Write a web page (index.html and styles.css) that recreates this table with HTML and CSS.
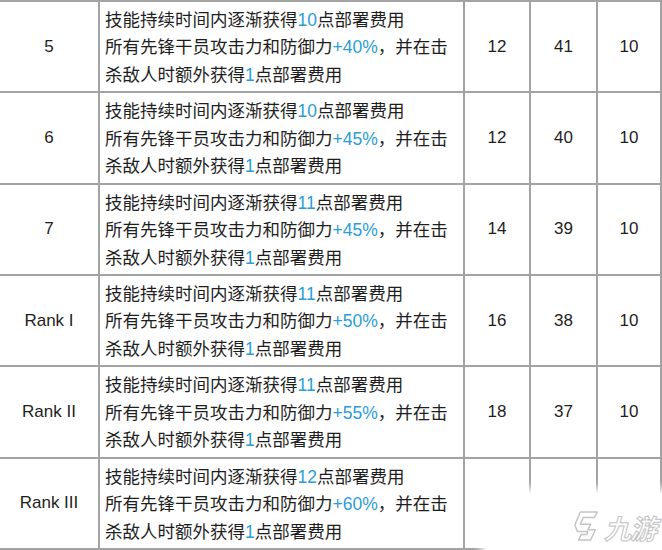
FILE: index.html
```html
<!DOCTYPE html>
<html lang="zh">
<head>
<meta charset="utf-8">
<link rel="stylesheet" href="styles.css">
</head>
<body>
<div class="table">
  <div class="row">
    <div class="cell lvl">5</div>
    <div class="cell desc"><p class="txt">技能持续时间内逐渐获得<span class="hl">10</span>点部署费用<br>所有先锋干员攻击力和防御力<span class="hl">+40%</span>，并在击<br>杀敌人时额外获得<span class="hl">1</span>点部署费用</p></div>
    <div class="cell num">12</div>
    <div class="cell num">41</div>
    <div class="cell num">10</div>
  </div>
  <div class="row">
    <div class="cell lvl">6</div>
    <div class="cell desc"><p class="txt">技能持续时间内逐渐获得<span class="hl">10</span>点部署费用<br>所有先锋干员攻击力和防御力<span class="hl">+45%</span>，并在击<br>杀敌人时额外获得<span class="hl">1</span>点部署费用</p></div>
    <div class="cell num">12</div>
    <div class="cell num">40</div>
    <div class="cell num">10</div>
  </div>
  <div class="row">
    <div class="cell lvl">7</div>
    <div class="cell desc"><p class="txt">技能持续时间内逐渐获得<span class="hl">11</span>点部署费用<br>所有先锋干员攻击力和防御力<span class="hl">+45%</span>，并在击<br>杀敌人时额外获得<span class="hl">1</span>点部署费用</p></div>
    <div class="cell num">14</div>
    <div class="cell num">39</div>
    <div class="cell num">10</div>
  </div>
  <div class="row">
    <div class="cell lvl">Rank I</div>
    <div class="cell desc"><p class="txt">技能持续时间内逐渐获得<span class="hl">11</span>点部署费用<br>所有先锋干员攻击力和防御力<span class="hl">+50%</span>，并在击<br>杀敌人时额外获得<span class="hl">1</span>点部署费用</p></div>
    <div class="cell num">16</div>
    <div class="cell num">38</div>
    <div class="cell num">10</div>
  </div>
  <div class="row">
    <div class="cell lvl">Rank II</div>
    <div class="cell desc"><p class="txt">技能持续时间内逐渐获得<span class="hl">11</span>点部署费用<br>所有先锋干员攻击力和防御力<span class="hl">+55%</span>，并在击<br>杀敌人时额外获得<span class="hl">1</span>点部署费用</p></div>
    <div class="cell num">18</div>
    <div class="cell num">37</div>
    <div class="cell num">10</div>
  </div>
  <div class="row">
    <div class="cell lvl">Rank III</div>
    <div class="cell desc"><p class="txt">技能持续时间内逐渐获得<span class="hl">12</span>点部署费用<br>所有先锋干员攻击力和防御力<span class="hl">+60%</span>，并在击<br>杀敌人时额外获得<span class="hl">1</span>点部署费用</p></div>
    <div class="cell num"></div>
    <div class="cell num"></div>
    <div class="cell num"></div>
  </div>
</div>
<div class="watermark">
  <svg class="wm-logo" width="28" height="34" viewBox="0 0 30 36">
    <path d="M9 3 L27 3 L24 9 L12 9 L9 16 L20 16 L17 22 L25 22 L20 33 L7 33 L10 27 L16 27 L17 24 L6 24 L3 17 Z" fill="#fff" stroke="#c4c4c4" stroke-width="1.6" stroke-linejoin="round"/>
  </svg>
  <span class="wm-text">九游</span>
</div>
</body>
</html>
```
FILE: styles.css
```css
html, body {
  margin: 0;
  padding: 0;
  background: #fff;
}
body {
  width: 662px;
  height: 550px;
  overflow: hidden;
  position: relative;
  font-family: "Liberation Sans", "Noto Sans CJK SC", sans-serif;
  color: #1e1e1e;
}
.table {
  display: grid;
  grid-template-rows: repeat(6, 91.33px);
  border-top: 2px solid #a3a3a3;
}
.row {
  display: grid;
  grid-template-columns: 100px 365px 66px 67px 64px;
}
.cell {
  border-right: 2px solid #a3a3a3;
  border-bottom: 2px solid #a3a3a3;
  display: flex;
  align-items: center;
  font-size: 17px;
  box-sizing: border-box;
  min-width: 0;
}
.lvl, .num {
  justify-content: center;
}
.desc {
  padding-left: 5px;
}
.txt {
  margin: 0;
  font-size: 17.5px;
  line-height: 27.5px;
  white-space: nowrap;
  padding-top: 3px;
}
.hl {
  color: #2a9dd6;
}
.watermark {
  position: absolute;
  left: 486px;
  top: 493px;
  width: 180px;
  height: 62px;
  background: #fff;
  box-shadow: 0 0 8px 5px #fff;
  display: flex;
  align-items: center;
  padding-left: 86px;
  box-sizing: border-box;
  gap: 4px;
}
.wm-logo {
  display: block;
  margin-top: 4px;
}
.wm-text {
  font-family: "Noto Sans CJK SC", sans-serif;
  font-size: 27px;
  font-weight: 700;
  font-style: italic;
  color: #fff;
  -webkit-text-stroke: 1px #c2c2c2;
  margin-top: 6px;
  letter-spacing: -1px;
}
```
